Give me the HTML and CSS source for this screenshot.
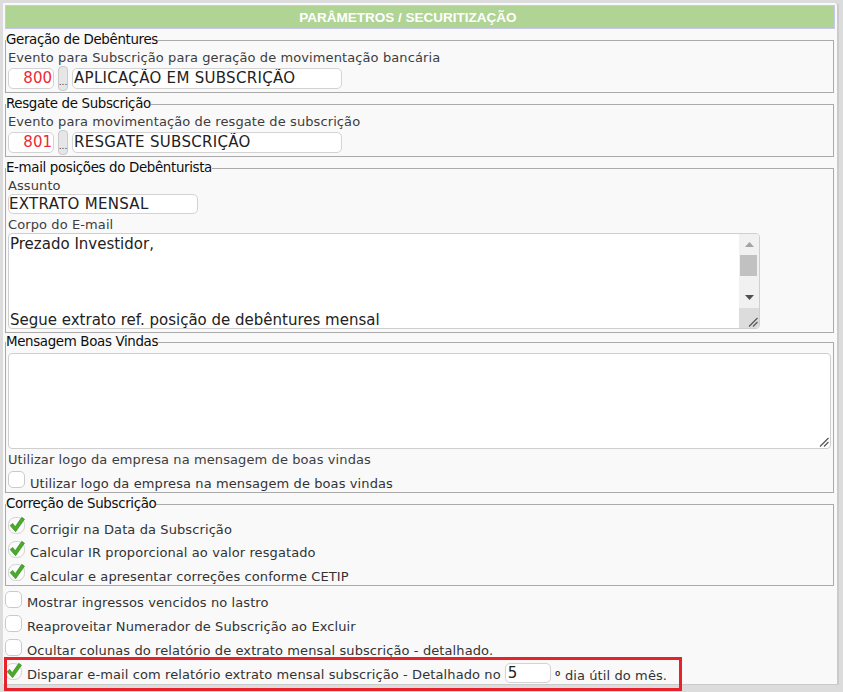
FILE: index.html
```html
<!DOCTYPE html>
<html lang="pt-BR">
<head>
<meta charset="utf-8">
<title>Parâmetros / Securitização</title>
<link rel="stylesheet" href="styles.css">
</head>
<body>
<div class="panel">
  <div class="header">PARÂMETROS / SECURITIZAÇÃO</div>

  <fieldset class="fs">
    <legend>Geração de Debêntures</legend>
    <div class="lbl">Evento para Subscrição para geração de movimentação bancária</div>
    <div class="evrow">
      <div class="inp code">800</div>
      <div class="dots">...</div>
      <div class="inp txt">APLICAÇÃO EM SUBSCRIÇÃO</div>
    </div>
  </fieldset>

  <fieldset class="fs">
    <legend>Resgate de Subscrição</legend>
    <div class="lbl">Evento para movimentação de resgate de subscrição</div>
    <div class="evrow">
      <div class="inp code">801</div>
      <div class="dots">...</div>
      <div class="inp txt">RESGATE SUBSCRIÇÃO</div>
    </div>
  </fieldset>

  <fieldset class="fs">
    <legend>E-mail posições do Debênturista</legend>
    <div class="lbl lbl-assunto">Assunto</div>
    <div class="inp assunto">EXTRATO MENSAL</div>
    <div class="lbl lbl-corpo">Corpo do E-mail</div>
    <div class="ta ta-corpo">
      <div class="ta-text">Prezado Investidor,



Segue extrato ref. posição de debêntures mensal</div>
      <div class="sb">
        <div class="sb-btn"><svg width="9" height="5" viewBox="0 0 9 5"><polygon points="0,5 4.5,0 9,5" fill="#a3a3a3"/></svg></div>
        <div class="sb-thumb"></div>
        <div class="sb-fill"></div>
        <div class="sb-btn"><svg width="9" height="5" viewBox="0 0 9 5"><polygon points="0,0 9,0 4.5,5" fill="#505050"/></svg></div>
        <div class="sb-corner"><svg width="10" height="10" viewBox="0 0 10 10"><path d="M9.5 1 L1 9.5 M9.5 5 L5 9.5" stroke="#5a5a5a" stroke-width="1.3" fill="none"/></svg></div>
      </div>
    </div>
  </fieldset>

  <fieldset class="fs fs-boas">
    <legend>Mensagem Boas Vindas</legend>
    <div class="ta ta-boas">
      <svg class="grip" width="10" height="10" viewBox="0 0 10 10"><path d="M9.5 1 L1 9.5 M9.5 5 L5 9.5" stroke="#5a5a5a" stroke-width="1.3" fill="none"/></svg>
    </div>
    <div class="lbl lbl-logo">Utilizar logo da empresa na mensagem de boas vindas</div>
    <div class="row row-logo">
      <span class="cb"></span>
      <span class="t">Utilizar logo da empresa na mensagem de boas vindas</span>
    </div>
  </fieldset>

  <fieldset class="fs fs-corr">
    <legend>Correção de Subscrição</legend>
    <div class="rows rows-corr">
      <div class="row">
        <svg class="chk" width="17" height="17" viewBox="0 0 17 17"><rect x="0.5" y="0.5" width="16" height="16" rx="7" fill="#fbfbfb" stroke="#d2d2d2"/><path d="M2.1 8.6 L4.7 6.4 L7.2 9.7 L13.8 0.3 L16.5 2.2 L7.6 14.8 Z" fill="#4aab2a" stroke="#2e8318" stroke-width="0.6" stroke-linejoin="round"/></svg>
        <span class="t">Corrigir na Data da Subscrição</span>
      </div>
      <div class="row">
        <svg class="chk" width="17" height="17" viewBox="0 0 17 17"><rect x="0.5" y="0.5" width="16" height="16" rx="7" fill="#fbfbfb" stroke="#d2d2d2"/><path d="M2.1 8.6 L4.7 6.4 L7.2 9.7 L13.8 0.3 L16.5 2.2 L7.6 14.8 Z" fill="#4aab2a" stroke="#2e8318" stroke-width="0.6" stroke-linejoin="round"/></svg>
        <span class="t">Calcular IR proporcional ao valor resgatado</span>
      </div>
      <div class="row">
        <svg class="chk" width="17" height="17" viewBox="0 0 17 17"><rect x="0.5" y="0.5" width="16" height="16" rx="7" fill="#fbfbfb" stroke="#d2d2d2"/><path d="M2.1 8.6 L4.7 6.4 L7.2 9.7 L13.8 0.3 L16.5 2.2 L7.6 14.8 Z" fill="#4aab2a" stroke="#2e8318" stroke-width="0.6" stroke-linejoin="round"/></svg>
        <span class="t">Calcular e apresentar correções conforme CETIP</span>
      </div>
    </div>
  </fieldset>

  <div class="rows rows-opts">
    <div class="row">
      <span class="cb"></span>
      <span class="t">Mostrar ingressos vencidos no lastro</span>
    </div>
    <div class="row">
      <span class="cb"></span>
      <span class="t">Reaproveitar Numerador de Subscrição ao Excluir</span>
    </div>
    <div class="row">
      <span class="cb"></span>
      <span class="t">Ocultar colunas do relatório de extrato mensal subscrição - detalhado.</span>
    </div>
    <div class="row row-last">
      <svg class="chk" width="17" height="17" viewBox="0 0 17 17"><rect x="0.5" y="0.5" width="16" height="16" rx="7" fill="#fbfbfb" stroke="#d2d2d2"/><path d="M2.1 8.6 L4.7 6.4 L7.2 9.7 L13.8 0.3 L16.5 2.2 L7.6 14.8 Z" fill="#4aab2a" stroke="#2e8318" stroke-width="0.6" stroke-linejoin="round"/></svg>
      <span class="t">Disparar e-mail com relatório extrato mensal subscrição - Detalhado no</span>
      <span class="inp num">5</span>
      <span class="t"><span class="ord">º</span> dia útil do mês.</span>
    </div>
  </div>
</div>
<div class="highlight"></div>
</body>
</html>
```

FILE: styles.css
```css
* { box-sizing: border-box; }

body {
  margin: 0;
  background: #dcdcdc;
  font-family: "DejaVu Sans", sans-serif;
  font-size: 13px;
  letter-spacing: 0.1px;
  color: #333;
}

.panel {
  margin: 3px 0 0 3px;
  width: 836px;
  height: 682px;
  background: #f9f9f9;
  border-right: 2px solid #cbcbcb;
  border-bottom: 1px solid #cbcbcb;
  border-top-right-radius: 4px;
  padding: 2px 3px 0 2px;
}

.header {
  height: 24px;
  margin-right: -1px;
  background: #b0d494;
  border: 1px solid #c8c8ee;
  color: #fff;
  font-family: "Liberation Sans", sans-serif;
  font-weight: bold;
  font-size: 13.5px;
  letter-spacing: 0;
  line-height: 21px;
  padding: 1px 24px 0 0;
  text-align: center;
}

.fs {
  margin: 3px 0 0 0;
  padding: 0 2px 3px 2px;
  border: 1px solid #aaa;
  min-width: 0;
}

.fs legend {
  padding: 0;
  margin-left: -2px;
  font-size: 13.4px;
  line-height: 16px;
  letter-spacing: -0.35px;
  color: #0d0d0d;
}

.fs-boas { margin-top: 1px; padding-bottom: 1px; }
.fs-corr { padding-bottom: 1px; }

.lbl {
  line-height: 16px;
  margin-top: 2px;
  color: #3d3d3d;
  white-space: nowrap;
}
.lbl-assunto { margin-top: 2px; }
.lbl-corpo { margin-top: 3px; }
.lbl-logo { margin-top: 3px; }

.evrow {
  display: flex;
  align-items: center;
  gap: 4px;
  height: 21px;
  margin-top: 2px;
}

.inp {
  display: block;
  background: #fff;
  border: 1px solid #d3d3d3;
  border-radius: 5px;
  height: 21px;
  font-size: 15px;
  line-height: 19px;
  color: #222;
  letter-spacing: 0.3px;
  white-space: nowrap;
  overflow: hidden;
}

.code {
  width: 46px;
  text-align: right;
  color: #ee2a36;
  padding-right: 1px;
  letter-spacing: 0;
}

.txt {
  width: 270px;
  padding-left: 1px;
}

.dots {
  width: 10px;
  height: 25px;
  margin: -2px 0;
  background: #e6e6e6;
  border: 1px solid #c9c9c9;
  border-radius: 4px;
  font-size: 9px;
  line-height: 1;
  letter-spacing: 0;
  color: #333;
  display: flex;
  align-items: flex-end;
  justify-content: center;
  padding-bottom: 3px;
}

.assunto {
  width: 190px;
  height: 20px;
  line-height: 18px;
}

.ta {
  display: flex;
  background: #fff;
  border: 1px solid #cfcfcf;
  border-radius: 4px;
  height: 96px;
  overflow: hidden;
}

.ta-corpo { width: 752px; }

.ta-text {
  flex: 1;
  white-space: pre;
  font-size: 15px;
  line-height: 19px;
  letter-spacing: 0;
  padding: 1px 0 0 1px;
  color: #222;
  overflow: hidden;
}

.sb {
  width: 20px;
  display: flex;
  flex-direction: column;
  background: #f1f1f1;
}

.sb-btn {
  height: 21px;
  display: flex;
  align-items: center;
  justify-content: center;
}

.sb-thumb {
  height: 21px;
  margin: 0 2px 0 1px;
  background: #c1c1c1;
}

.sb-fill { flex: 1; }

.sb-corner {
  height: 20px;
  background: #dcdcdc;
  display: flex;
  align-items: flex-end;
  justify-content: flex-end;
  padding: 0 1px 1px 0;
}

.ta-boas {
  margin-top: 3px;
  width: 100%;
  align-items: flex-end;
  justify-content: flex-end;
  padding: 0 1px 1px 0;
}

.row {
  display: flex;
  align-items: flex-start;
  gap: 5px;
  height: 21px;
}

.row .t {
  line-height: 16px;
  padding-top: 5.5px;
  white-space: nowrap;
  color: #333;
}

.ord {
  font-family: Inter, "Open Sans", sans-serif;
}

.row-logo { margin-top: 2px; }

.cb {
  flex: none;
  width: 17px;
  height: 17px;
  margin-top: 1px;
  background: #fff;
  border: 1px solid #cacaca;
  border-radius: 5px;
}

.chk {
  flex: none;
  margin-top: 1px;
  overflow: visible;
}

.rows {
  display: flex;
  flex-direction: column;
}

.rows-corr {
  margin-top: 4px;
  gap: 2.5px;
}

.rows-opts {
  margin-top: 3.5px;
  gap: 3px;
}

.row-last { gap: 4px; }
.row-last .chk { margin-right: 1px; }

.num {
  width: 46px;
  height: 20px;
  line-height: 18px;
  margin-top: 1.5px;
  padding-left: 2px;
  letter-spacing: 0;
}

.highlight {
  position: absolute;
  left: 4px;
  top: 657px;
  width: 678px;
  height: 34px;
  border: 3px solid #e7222b;
}
```
